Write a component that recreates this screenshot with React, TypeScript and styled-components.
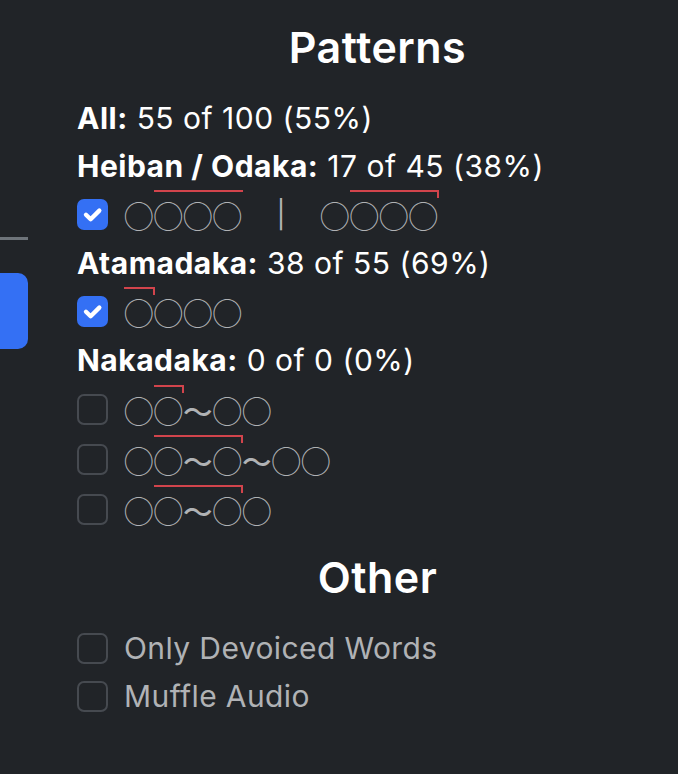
import React from "react";
import styled, { createGlobalStyle, css } from "styled-components";

const Global = createGlobalStyle`
  html, body { margin: 0; padding: 0; background: #212428; }
  body { font-family: Inter, "Noto Sans", sans-serif; color: #ffffff; }
  #root { min-height: 774px; }
`;

const RED = "#d2444c";
const BLUE = "#3470f4";
const GRAY = "#b0b2b5";

const Page = styled.div`
  display: flex;
  min-height: 774px;
  background: #212428;
  overflow: hidden;
`;

const Sidebar = styled.aside`
  width: 28px;
  flex: none;
  display: flex;
  flex-direction: column;
  padding-top: 237px;
  overflow: hidden;
`;

const SideDivider = styled.div`
  height: 3px;
  background: #6e747a;
`;

const SideButton = styled.div`
  margin-top: 33px;
  height: 76px;
  background: ${BLUE};
  border-radius: 0 10px 10px 0;
`;

const Main = styled.main`
  flex: 1;
  padding: 22px 0 0 49px;
  display: flex;
  flex-direction: column;
`;

const Heading = styled.h2<{ $gap?: number }>`
  margin: ${(p) => p.$gap ?? 0}px 0 0;
  font-size: 43px;
  line-height: 50px;
  font-weight: 600;
  text-align: center;
  color: #ffffff;
  letter-spacing: 0.5px;
`;

const StatLine = styled.div<{ $first?: boolean }>`
  height: 48px;
  display: flex;
  align-items: center;
  font-size: 30px;
  letter-spacing: 0.5px;
  margin-top: ${(p) => (p.$first ? 22 : 0)}px;
  white-space: pre;
`;

const Bold = styled.b`
  font-weight: 700;
`;

const OptionRow = styled.label<{ $h?: number; $gap?: number }>`
  height: ${(p) => p.$h ?? 49}px;
  margin-top: ${(p) => p.$gap ?? 0}px;
  display: flex;
  align-items: center;
  gap: 16px;
`;

const Box = styled.span<{ $checked?: boolean }>`
  width: 31px;
  height: 31px;
  box-sizing: border-box;
  border-radius: 7px;
  flex: none;
  display: flex;
  align-items: center;
  justify-content: center;
  ${(p) =>
    p.$checked
      ? css`
          background: ${BLUE};
        `
      : css`
          border: 2px solid #464a50;
          background: transparent;
        `}
`;

const Pattern = styled.span`
  font-family: "Noto Sans CJK JP", "Noto Sans CJK SC", sans-serif;
  font-size: 29.5px;
  font-weight: 500;
  line-height: 34px;
  color: ${GRAY};
  white-space: pre;
  display: flex;
  align-items: center;
  margin-top: 1px;
`;

const Accent = styled.span<{ $drop?: boolean }>`
  position: relative;
  &::before {
    content: "";
    position: absolute;
    left: 0;
    right: -1px;
    top: -8px;
    height: 2px;
    background: ${RED};
  }
  ${(p) =>
    p.$drop &&
    css`
      &::after {
        content: "";
        position: absolute;
        right: -1px;
        top: -8px;
        width: 2px;
        height: 8px;
        background: ${RED};
      }
    `}
`;

const Sep = styled.span`
  width: 78px;
  text-align: center;
  font-family: Inter, sans-serif;
  font-weight: 400;
  font-size: 27px;
  color: ${GRAY};
`;

const OptionText = styled.span`
  font-size: 30px;
  letter-spacing: 0.4px;
  color: ${GRAY};
`;

const Check = () => (
  <svg width="31" height="31" viewBox="0 0 20 20" fill="none">
    <path d="M5.8 10.2l3 2.9l5.6-5.6" stroke="#fff" strokeWidth="2.8" strokeLinecap="round" strokeLinejoin="round" />
  </svg>
);

const CheckBox = ({ checked }: { checked?: boolean }) => (
  <Box $checked={checked}>{checked && <Check />}</Box>
);

export default function App() {
  return (
    <>
      <Global />
      <Page>
        <Sidebar>
          <SideDivider />
          <SideButton />
        </Sidebar>
        <Main>
          <Heading>Patterns</Heading>
          <StatLine $first>
            <Bold>All:</Bold> 55 of 100 (55%)
          </StatLine>
          <StatLine>
            <Bold>Heiban / Odaka:</Bold> 17 of 45 (38%)
          </StatLine>
          <OptionRow>
            <CheckBox checked />
            <Pattern>
              ◯<Accent>◯◯◯</Accent>
              <Sep>|</Sep>◯<Accent $drop>◯◯◯</Accent>
            </Pattern>
          </OptionRow>
          <StatLine>
            <Bold>Atamadaka:</Bold> 38 of 55 (69%)
          </StatLine>
          <OptionRow>
            <CheckBox checked />
            <Pattern>
              <Accent $drop>◯</Accent>◯◯◯
            </Pattern>
          </OptionRow>
          <StatLine>
            <Bold>Nakadaka:</Bold> 0 of 0 (0%)
          </StatLine>
          <OptionRow $h={50}>
            <CheckBox />
            <Pattern>
              ◯<Accent $drop>◯</Accent>〜◯◯
            </Pattern>
          </OptionRow>
          <OptionRow $h={50}>
            <CheckBox />
            <Pattern>
              ◯<Accent $drop>◯〜◯</Accent>〜◯◯
            </Pattern>
          </OptionRow>
          <OptionRow $h={50}>
            <CheckBox />
            <Pattern>
              ◯<Accent $drop>◯〜◯</Accent>◯
            </Pattern>
          </OptionRow>
          <Heading $gap={18}>Other</Heading>
          <OptionRow $h={48} $gap={22}>
            <CheckBox />
            <OptionText>Only Devoiced Words</OptionText>
          </OptionRow>
          <OptionRow $h={48}>
            <CheckBox />
            <OptionText>Muffle Audio</OptionText>
          </OptionRow>
        </Main>
      </Page>
    </>
  );
}
